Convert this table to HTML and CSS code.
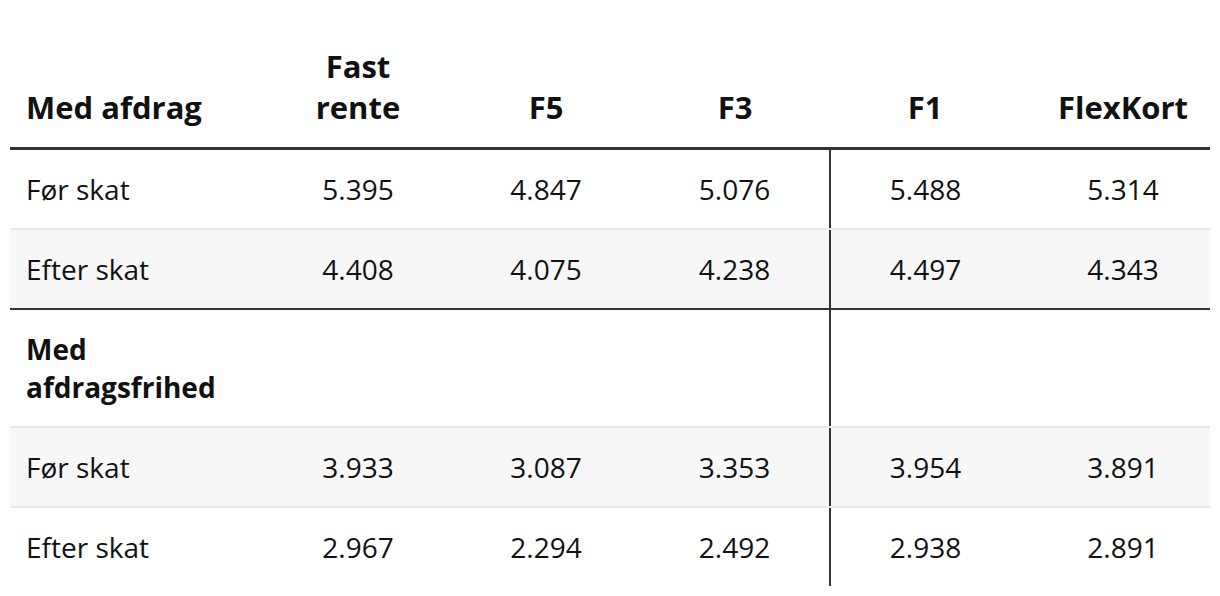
FILE: index.html
```html
<!DOCTYPE html>
<html lang="da">
<head>
<meta charset="utf-8">
<title>Ydelse</title>
<link rel="stylesheet" href="styles.css">
</head>
<body>
<div class="wrap">
  <table class="rates">
    <colgroup>
      <col class="c-label">
      <col class="c-num">
      <col class="c-num">
      <col class="c-num3">
      <col class="c-num3">
      <col class="c-num3">
    </colgroup>
    <thead>
      <tr>
        <th class="lbl">Med afdrag</th>
        <th>Fast<br>rente</th>
        <th>F5</th>
        <th>F3</th>
        <th>F1</th>
        <th class="last">FlexKort</th>
      </tr>
    </thead>
    <tbody>
      <tr>
        <td class="lbl">Før skat</td>
        <td>5.395</td>
        <td>4.847</td>
        <td>5.076</td>
        <td class="split">5.488</td>
        <td class="last">5.314</td>
      </tr>
      <tr class="section-end">
        <td class="lbl">Efter skat</td>
        <td>4.408</td>
        <td>4.075</td>
        <td>4.238</td>
        <td class="split">4.497</td>
        <td class="last">4.343</td>
      </tr>
      <tr class="section">
        <td class="lbl">Med afdragsfrihed</td>
        <td></td>
        <td></td>
        <td></td>
        <td class="split"></td>
        <td class="last"></td>
      </tr>
      <tr>
        <td class="lbl">Før skat</td>
        <td>3.933</td>
        <td>3.087</td>
        <td>3.353</td>
        <td class="split">3.954</td>
        <td class="last">3.891</td>
      </tr>
      <tr class="final">
        <td class="lbl">Efter skat</td>
        <td>2.967</td>
        <td>2.294</td>
        <td>2.492</td>
        <td class="split">2.938</td>
        <td class="last">2.891</td>
      </tr>
    </tbody>
  </table>
</div>
</body>
</html>
```
FILE: styles.css
```css
html, body {
  margin: 0;
  padding: 0;
  background: #ffffff;
}

body {
  font-family: "Open Sans", "Noto Sans", sans-serif;
  color: #111111;
}

.wrap {
  padding: 26px 10px 0 10px;
}

.rates {
  width: 1200px;
  border-collapse: collapse;
  table-layout: fixed;
}

.c-label { width: 254px; }
.c-num { width: 188px; }
.c-num3 { width: 190px; }

.rates th {
  font-size: 31px;
  font-weight: 700;
  line-height: 41px;
  text-align: center;
  vertical-align: bottom;
  padding: 20px 16px 19px 16px;
  border-bottom: 3px solid #333333;
}

.rates td {
  font-size: 28px;
  font-weight: 400;
  line-height: 38px;
  text-align: center;
  vertical-align: top;
  padding: 20px 16px;
  border-bottom: 2px solid #e8e8e8;
}

.rates th.lbl,
.rates td.lbl {
  text-align: left;
}

.rates th.last,
.rates td.last {
  padding-left: 16px;
  padding-right: 0;
}

.rates td.split {
  border-left: 2px solid #333333;
}

.rates tbody tr:nth-child(even) td {
  background: #f7f7f7;
}

.rates tr.section-end td {
  border-bottom: 2px solid #333333;
}

.rates tr.section td.lbl {
  font-weight: 700;
}

.rates tr.final td {
  border-bottom: none;
}
```
